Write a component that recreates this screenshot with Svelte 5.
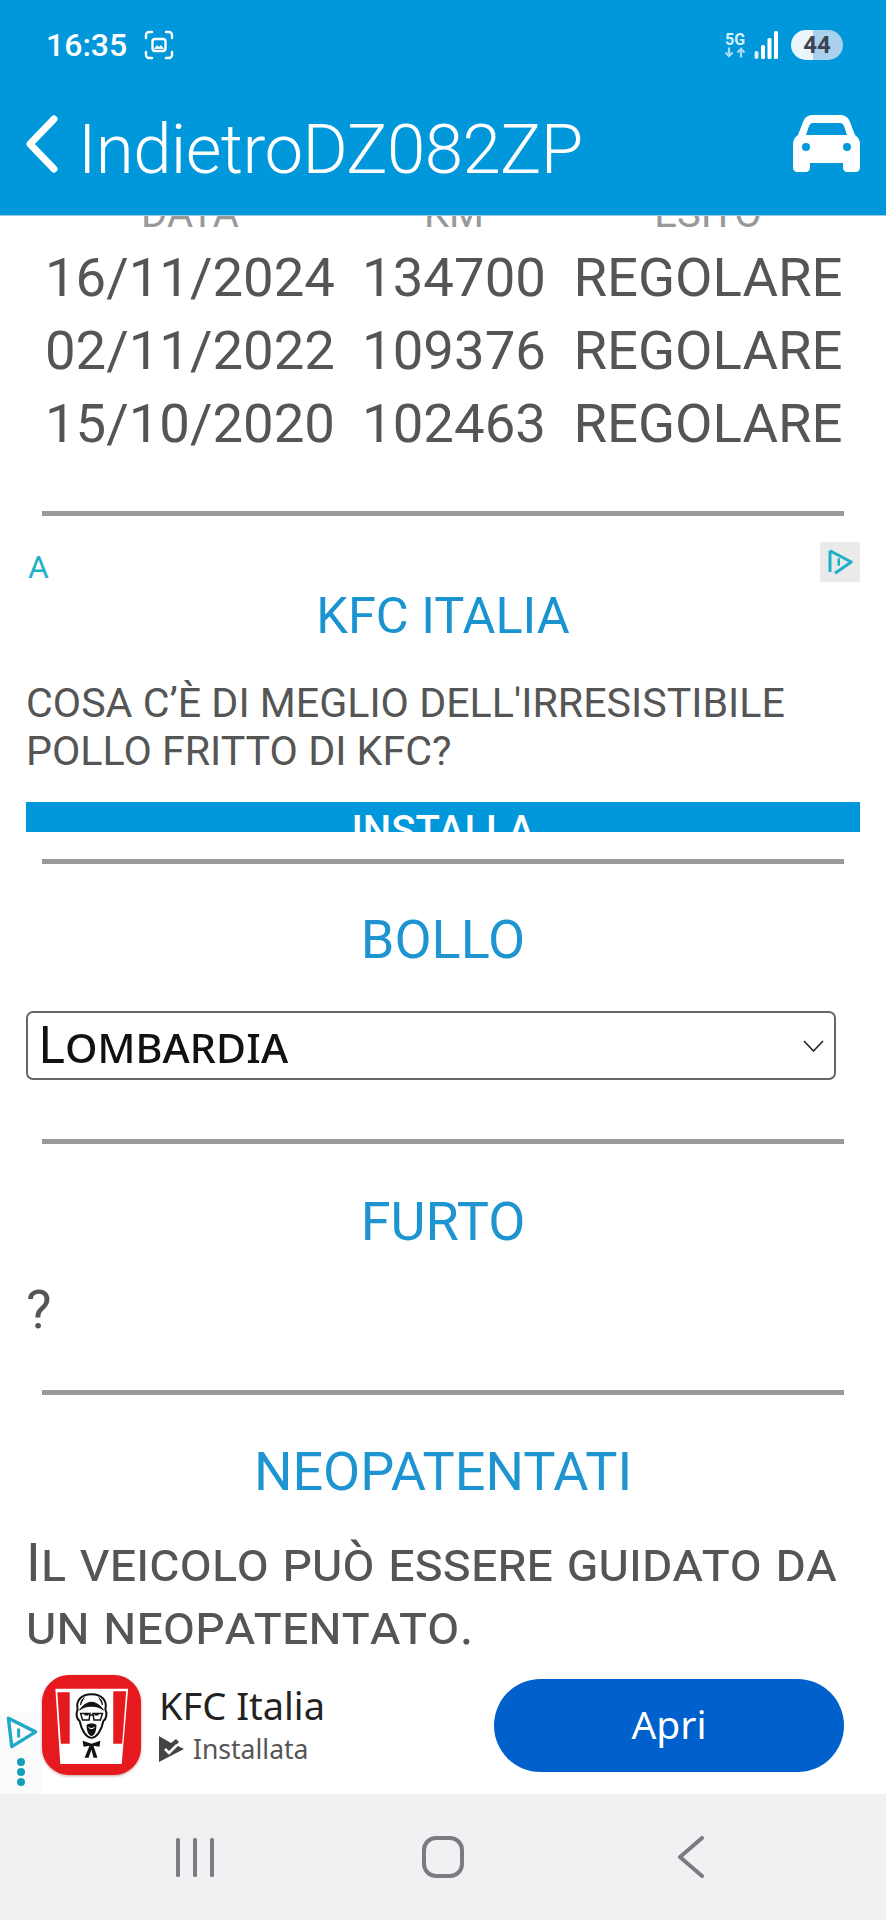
<script>
  const rows = [
    ['16/11/2024', '134700', 'REGOLARE'],
    ['02/11/2022', '109376', 'REGOLARE'],
    ['15/10/2020', '102463', 'REGOLARE']
  ];
</script>

<div class="phone">
  <header class="top">
    <div class="status">
      <div class="status-left">
        <span class="time">16:35</span>
        <svg class="shot" viewBox="0 0 30 30" fill="none" stroke="#fff" stroke-width="2.4" stroke-linecap="round">
          <path d="M2 8V5a3 3 0 0 1 3-3h3M22 2h3a3 3 0 0 1 3 3v3M28 22v3a3 3 0 0 1-3 3h-3M8 28H5a3 3 0 0 1-3-3v-3" />
          <rect x="8.5" y="9" width="13" height="12" rx="2.5" />
          <path d="M10 19l3-4 2 2 2-2 3 4z" fill="#fff" stroke="none" />
        </svg>
      </div>
      <div class="status-right">
        <div class="net">
          <span>5G</span>
          <svg viewBox="0 0 24 10" fill="none" stroke="#a9daf3" stroke-width="2.2">
            <path d="M6 0v8M2.5 5L6 8.6 9.5 5M18 10V2M14.5 5L18 1.4 21.5 5" />
          </svg>
        </div>
        <svg class="bars" viewBox="0 0 24 28" fill="#fff">
          <rect x="0" y="20" width="4" height="8" rx="2" opacity="0.85" />
          <rect x="6.5" y="14" width="4" height="14" rx="1.5" />
          <rect x="13" y="7" width="4" height="21" rx="1.5" />
          <rect x="19.5" y="0" width="4" height="28" rx="1.5" />
        </svg>
        <div class="battery">44</div>
      </div>
    </div>
    <div class="title-bar">
      <svg class="back" viewBox="0 0 34 58" fill="none" stroke="#fff" stroke-width="7" stroke-linecap="round" stroke-linejoin="round">
        <path d="M29 4L5 29l24 25" />
      </svg>
      <h1><span>Indietro</span><span>DZ082ZP</span></h1>
      <svg class="car" viewBox="0 0 67 57" fill="#fff">
        <path fill-rule="evenodd" d="M20 0h27c5 0 8 2 10 7l5 13c3 2 5 5 5 9v24c0 2-2 4-4 4h-9c-2 0-4-2-4-4v-5H17v5c0 2-2 4-4 4H4c-2 0-4-2-4-4V29c0-4 2-7 5-9l5-13c2-5 5-7 10-7zM20 8c-2 0-3 1-4 3l-3 9h41l-3-9c-1-2-2-3-4-3zM13 28a4 4 0 1 0 0 8 4 4 0 0 0 0-8zM54 28a4 4 0 1 0 0 8 4 4 0 0 0 0-8z" />
      </svg>
    </div>
  </header>

  <main class="scroll">
    <div class="sheet">
      <div class="table">
        <div class="row head"><span>DATA</span><span>KM</span><span>ESITO</span></div>
        {#each rows as row}
          <div class="row"><span>{row[0]}</span><span>{row[1]}</span><span>{row[2]}</span></div>
        {/each}
      </div>
      <hr class="first" />

      <div class="ad">
        <span class="ad-a">A</span>
        <span class="ad-choice">
          <svg viewBox="0 0 24 24" fill="none" stroke="#1fb0c8" stroke-width="2.4" stroke-linejoin="round">
            <path d="M4 3l17 9-13 9" /><path d="M4 3v17" />
            <path d="M11 9v6" stroke-width="2" />
          </svg>
        </span>
        <h2>KFC ITALIA</h2>
        <p>COSA C’È DI MEGLIO DELL'IRRESISTIBILE POLLO FRITTO DI KFC?</p>
        <div class="install"><span>INSTALLA</span></div>
      </div>
      <hr class="after-ad" />

      <h3 class="bollo">BOLLO</h3>
      <div class="select">
        <span>Lombardia</span>
        <svg viewBox="0 0 21 12" fill="none" stroke="#222" stroke-width="1.6"><path d="M1 1l9.500 10L20 1" /></svg>
      </div>
      <hr class="after-select" />

      <h3 class="furto">FURTO</h3>
      <p class="plain">?</p>
      <hr class="after-plain" />

      <h3 class="neo">NEOPATENTATI</h3>
      <p class="smallcaps">Il veicolo può essere guidato da un neopatentato.</p>
    </div>
  </main>

  <aside class="banner">
    <div class="side">
      <svg viewBox="0 0 30 30" fill="none" stroke="#1fa9c6" stroke-width="3" stroke-linejoin="round">
        <path d="M3 2l24 12L6 27z" /><path d="M12 11v8" stroke-width="2.600" />
      </svg>
      <i></i><i></i><i></i>
    </div>
    <div class="app-icon">
      <svg viewBox="0 0 100 100">
        <path d="M13.500 13.500h73.500l-6.500 76H18.500z" fill="#fff" />
        <path d="M15.500 17H28v52h-9zM85 16H72v53h9z" fill="#e6191e" />
        <path d="M50 19c-11 0-16 7-14 15-2 5-1 10 2 12 2 10 7 17 12 17s10-7 12-17c3-2 4-7 2-12 2-8-3-15-14-15z" fill="#fff" stroke="#111" stroke-width="2" />
        <path d="M38 35c3-5 8-8 12-8s9 3 12 8c-3-3-8-4-12-4s-9 1-12 4zM43 22c-3 2-4 5-4 8M57 22c3 2 4 5 4 8" fill="#111" stroke="#111" stroke-width="1" />
        <path d="M39 38.500h9.500l-1 6.500H41zM51.500 38.500H61L59 45h-6.500zM48.500 40h3" fill="none" stroke="#111" stroke-width="1.500" />
        <path d="M43 39.500h4M53 39.500h4" stroke="#111" stroke-width="2" />
        <path d="M45 50c3-2 7-2 10 0 0 6-2 11-5 11s-5-5-5-11z" fill="#111" />
        <path d="M46.500 51.500c2.500 2 4.500 2 7 0-1.500 3.500-5.500 3.500-7 0z" fill="#fff" />
        <path d="M41 66l9 3 9-3-1 6-6-1 4 12h-4l-2-8-3 8h-4l5-12-6 1z" fill="#111" />
      </svg>
    </div>
    <div class="app-text">
      <div class="app-name">KFC Italia</div>
      <div class="app-state">
        <svg viewBox="0 0 25 26"><path d="M0 0l12 7 5-4 3 3-3 3 8 4L0 26z" fill="#444" /><path d="M6 13l4 4 8-8" fill="none" stroke="#fff" stroke-width="2.600" /></svg>
        <span>Installata</span>
      </div>
    </div>
    <div class="open">Apri</div>
  </aside>

  <nav class="soft-keys">
    <svg class="recents" viewBox="0 0 38 39" fill="#7b7c80">
      <rect x="0" y="0" width="4" height="39" rx="1.500" />
      <rect x="17" y="0" width="4" height="39" rx="1.500" />
      <rect x="34" y="0" width="4" height="39" rx="1.500" />
    </svg>
    <span class="home"></span>
    <svg class="prev" viewBox="0 0 28 42" fill="none" stroke="#7b7c80" stroke-width="4" stroke-linecap="round" stroke-linejoin="round">
      <path d="M25 2L3 21l22 19" />
    </svg>
  </nav>
</div>

<style>
  :global(body) {
    margin: 0;
    background: #fff;
  }

  .phone {
    width: 886px;
    height: 1920px;
    display: flex;
    flex-direction: column;
    overflow: hidden;
    font-family: Roboto, 'Liberation Sans', sans-serif;
  }

  .top {
    flex: 0 0 216px;
    box-sizing: border-box;
    background: #0098db;
    color: #fff;
    border-bottom: 1px solid #9fc9de;
  }

  .status {
    height: 90px;
    padding: 0 43px 0 46px;
    display: flex;
    align-items: center;
    justify-content: space-between;
  }

  .status-left {
    display: flex;
    align-items: center;
    gap: 17px;
  }

  .time {
    font-size: 32px;
    font-weight: 500;
  }

  .shot {
    width: 30px;
    height: 30px;
  }

  .status-right {
    display: flex;
    align-items: center;
    gap: 7px;
  }

  .net {
    width: 24px;
    display: flex;
    flex-direction: column;
    align-items: center;
    font-size: 16px;
    font-weight: 700;
    line-height: 15px;
    color: #d7effa;
  }

  .net svg {
    width: 24px;
    height: 11px;
  }

  .bars {
    width: 25px;
    height: 28px;
  }

  .battery {
    margin-left: 5px;
    width: 52px;
    height: 30px;
    border-radius: 15px;
    background: linear-gradient(90deg, #eaf5fc 0 42%, #a9d1ed 42%);
    color: #3b4450;
    font-size: 24px;
    font-weight: 700;
    line-height: 30px;
    text-align: center;
  }

  .title-bar {
    height: 106px;
    padding: 0 26px 0 25px;
    display: flex;
    align-items: flex-start;
  }

  .back {
    width: 34px;
    height: 58px;
    margin-top: 25px;
  }

  h1 {
    margin: 20px 0 0 19px;
    flex: 1;
    font-size: 69px;
    font-weight: 300;
    letter-spacing: -0.6px;
    line-height: 80px;
    white-space: nowrap;
  }

  .car {
    width: 67px;
    height: 57px;
    margin-top: 25px;
  }

  .scroll {
    flex: 1;
    min-height: 0;
    overflow: hidden;
  }

  .sheet {
    margin-top: -29px;
    padding: 0 26px;
  }

  .table {
    color: #555;
  }

  .row {
    display: grid;
    grid-template-columns: 328px 200px 308px;
    height: 73px;
    align-items: center;
    font-size: 54.5px;
    line-height: 73px;
    white-space: nowrap;
  }

  .row span {
    text-align: center;
  }

  .row.head {
    height: 54px;
    line-height: 54px;
    font-size: 40px;
    color: #999;
  }

  hr {
    margin: 0 16px;
    border: 0;
    height: 5px;
    background: #999;
  }

  hr.first {
    margin-top: 51px;
  }

  .ad {
    position: relative;
    height: 290px;
    margin-top: 26px;
    overflow: hidden;
  }

  .ad-a {
    position: absolute;
    left: 2px;
    top: 7px;
    font-size: 32px;
    line-height: 36px;
    color: #1fb0c8;
  }

  .ad-choice {
    position: absolute;
    right: 0;
    top: 0;
    width: 40px;
    height: 40px;
    background: #eaeaea;
    display: grid;
    place-items: center;
  }

  .ad-choice svg {
    width: 30px;
    height: 30px;
  }

  .ad h2 {
    margin: 0;
    padding-top: 40px;
    font-size: 50.5px;
    font-weight: 400;
    line-height: 68px;
    text-align: center;
    color: #1a94d0;
  }

  .ad p {
    margin: 29px 0 0;
    font-size: 41.2px;
    line-height: 48px;
    color: #555;
  }

  .install {
    margin-top: 27px;
    height: 90px;
    background: #0098db;
    color: #fff;
    font-size: 40px;
    font-weight: 500;
    line-height: 58px;
    text-align: center;
  }

  hr.after-ad {
    margin-top: 27px;
  }

  h3 {
    font-size: 54px;
    font-weight: 400;
    line-height: 68px;
    text-align: center;
    color: #1e95d0;
  }

  h3.bollo {
    margin: 42px 0 0;
  }

  h3.furto {
    margin: 44px 0 0;
  }

  h3.neo {
    margin: 43px 0 0;
  }

  .select {
    box-sizing: border-box;
    width: 810px;
    height: 69px;
    margin-top: 37px;
    padding: 0 10px 0 10px;
    border: 2px solid #666;
    border-radius: 7px;
    display: flex;
    align-items: center;
    justify-content: space-between;
    font-family: 'Noto Sans', Arial, sans-serif;
    font-size: 51.5px;
    line-height: 61px;
    font-variant: small-caps;
    color: #111;
  }

  .select span {
    margin-top: -4px;
  }

  .select svg {
    width: 21px;
    height: 12px;
  }

  hr.after-select {
    margin-top: 59px;
  }

  .plain {
    margin: 24px 0 0;
    font-size: 54px;
    line-height: 60px;
    color: #555;
  }

  hr.after-plain {
    margin-top: 50px;
  }

  .smallcaps {
    margin: 25px 0 0;
    font-size: 54px;
    font-variant: small-caps;
    letter-spacing: 0.2px;
    line-height: 63px;
    color: #555;
  }

  .banner {
    position: relative;
    flex: 0 0 134px;
    padding: 0 42px;
    display: flex;
    align-items: center;
    background: #fff;
    box-sizing: border-box;
  }

  .side {
    position: absolute;
    left: 0;
    bottom: 0;
    width: 42px;
    height: 82px;
    background: #fbfbfb;
    display: flex;
    flex-direction: column;
    align-items: center;
    gap: 2px;
  }

  .side svg {
    width: 34px;
    height: 34px;
    margin: 4px 0 6px 2px;
  }

  .side i {
    width: 8px;
    height: 8px;
    border-radius: 50%;
    background: #139fb8;
  }

  .app-icon {
    width: 99px;
    height: 100px;
    margin-top: -4px;
    border-radius: 27px;
    background: #e6191e;
    box-shadow: 0 1px 3px rgba(120, 20, 20, 0.4);
    flex: none;
    position: relative;
  }

  .app-icon svg {
    width: 99px;
    height: 100px;
    display: block;
  }

  .app-text {
    flex: 1;
    margin-left: 18px;
    margin-top: -4px;
  }

  .app-name {
    margin-top: -2px;
    font-family: 'Noto Sans', sans-serif;
    font-size: 38px;
    line-height: 42px;
    color: #222;
  }

  .app-state {
    display: flex;
    align-items: center;
    gap: 9px;
    margin-top: 7px;
    font-family: 'Noto Sans', sans-serif;
    font-size: 26.5px;
    line-height: 32px;
    color: #555;
  }

  .app-state svg {
    width: 25px;
    height: 26px;
  }

  .open {
    width: 350px;
    height: 93px;
    margin-top: -3px;
    border-radius: 47px;
    background: #0060cc;
    color: #fff;
    font-family: 'Noto Sans', sans-serif;
    font-size: 39px;
    line-height: 90px;
    text-align: center;
    flex: none;
  }

  .soft-keys {
    flex: 0 0 126px;
    background: #f0f1f3;
    display: grid;
    grid-template-columns: repeat(3, 248px);
    justify-content: center;
    align-items: center;
    justify-items: center;
  }

  .recents {
    width: 38px;
    height: 39px;
  }

  .home {
    width: 34px;
    height: 34px;
    border: 4px solid #7b7c80;
    border-radius: 14px;
  }

  .prev {
    width: 28px;
    height: 42px;
  }
</style>
